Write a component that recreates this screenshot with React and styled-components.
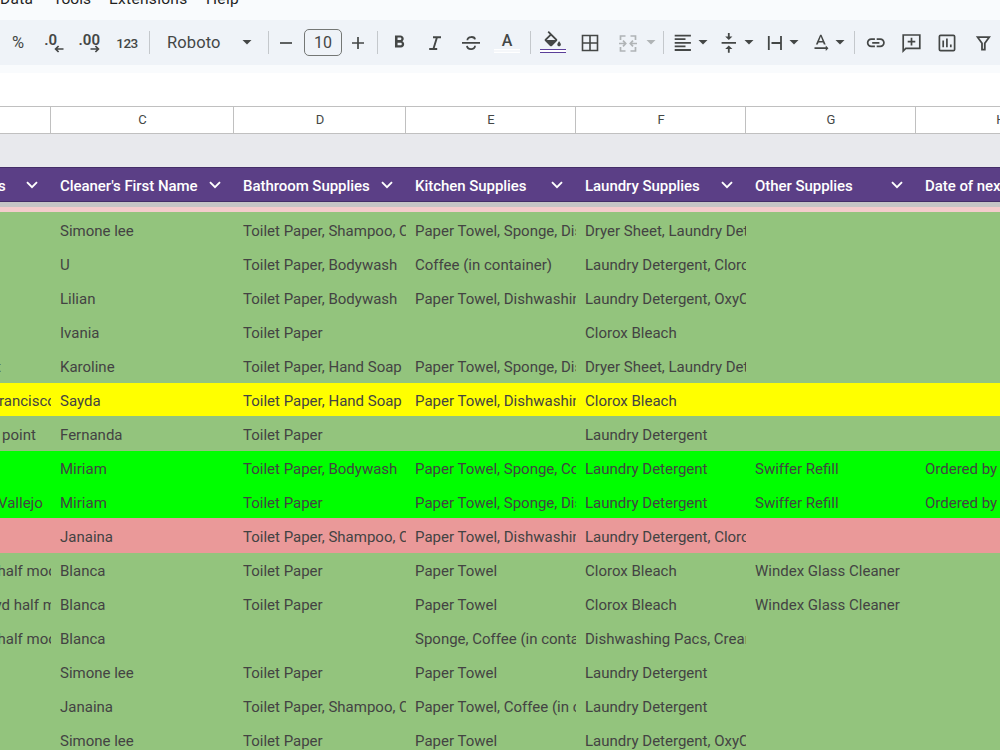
import React from "react";
import styled, { createGlobalStyle } from "styled-components";
import {
  MdFormatBold,
  MdFormatColorFill,
  MdFormatAlignLeft,
  MdVerticalAlignCenter,
  MdTextRotationNone,
  MdLink,
} from "react-icons/md";

const Global = createGlobalStyle`
  * { box-sizing: border-box; }
  body { margin: 0; overflow: hidden; }
`;

const Page = styled.div`
  width: 1000px;
  height: 750px;
  overflow: hidden;
  display: flex;
  flex-direction: column;
  background: #fff;
  font-family: Roboto, "Liberation Sans", sans-serif;
`;

const MenuBar = styled.nav`
  flex: none;
  height: 20px;
  background: #f9fbfd;
  overflow: hidden;
  display: flex;
  align-items: flex-start;
`;

const MenuItem = styled.span`
  flex: none;
  width: ${(p) => p.$w}px;
  margin-top: -10px;
  line-height: 18px;
  font-size: 15.5px;
  letter-spacing: ${(p) => p.$ls || 0}px;
  color: #1f1f1f;
  white-space: nowrap;
`;

const Toolbar = styled.div`
  flex: none;
  height: 45px;
  background: #eff3f8;
  display: flex;
  align-items: center;
  color: #444746;
`;

const ToolbarGap = styled.div`
  flex: none;
  height: 8px;
  background: #f9fbfd;
`;

const FormulaBar = styled.div`
  flex: none;
  height: 33px;
  background: #fff;
`;

const Tool = styled.div`
  flex: none;
  width: ${(p) => p.$w || 22}px;
  height: 36px;
  margin-left: ${(p) => p.$ml || 0}px;
  display: flex;
  align-items: center;
  justify-content: center;
  color: ${(p) => (p.$disabled ? "#b0b4b6" : "#444746")};
  svg { flex: none; display: block; }
`;

const ToolText = styled.span`
  font-size: ${(p) => p.$size}px;
  font-weight: ${(p) => p.$weight || 400};
  letter-spacing: ${(p) => p.$ls || 0}px;
  line-height: 20px;
  white-space: nowrap;
`;

const Separator = styled.div`
  flex: none;
  width: 1px;
  height: 23px;
  margin-left: ${(p) => p.$ml}px;
  background: #c4c8cc;
`;

const FontPicker = styled.div`
  flex: none;
  width: 85px;
  margin-left: 17px;
  display: flex;
  align-items: center;
  justify-content: space-between;
`;

const SizeBox = styled.div`
  flex: none;
  width: 38px;
  height: 27px;
  margin-left: 7px;
  border: 1px solid #747775;
  border-radius: 5px;
  display: flex;
  align-items: center;
  justify-content: center;
`;

const DecimalBox = styled.div`
  display: flex;
  flex-direction: column;
  align-items: flex-end;
  width: 20px;
  height: 20px;
`;

const DecimalText = styled.span`
  height: 12px;
  line-height: 14px;
  font-size: 15px;
  font-weight: 600;
  margin-right: ${(p) => p.$mr}px;
`;

const ColorTool = styled.div`
  flex: none;
  width: 26px;
  height: 24px;
  margin-left: ${(p) => p.$ml}px;
  display: flex;
  flex-direction: column;
  align-items: center;
  color: #444746;
  svg { display: block; }
`;

const Glyph = styled.div`
  height: 18px;
  display: flex;
  align-items: flex-start;
  justify-content: center;
  font-size: 16px;
  font-weight: 500;
  line-height: 19px;
`;

const Swatch = styled.div`
  width: 26px;
  height: 4px;
  border-top: 1px solid ${(p) => p.$c};
  border-bottom: 1px solid ${(p) => p.$c};
  background: ${(p) => p.$fill};
`;

const ColumnHeads = styled.div`
  flex: none;
  height: 28px;
  display: flex;
  border-top: 1px solid #c0c0c0;
  border-bottom: 1px solid #c0c0c0;
  background: #fff;
`;

const ColumnHead = styled.div`
  flex: none;
  width: ${(p) => p.$w}px;
  padding-left: 1px;
  border-right: 1px solid #c0c0c0;
  display: flex;
  align-items: center;
  justify-content: center;
  font-size: 13px;
  line-height: 26px;
  color: #444746;
`;

const EmptyRow = styled.div`
  flex: none;
  height: 33px;
  background: #e8e9ed;
`;

const HeaderRow = styled.div`
  flex: none;
  height: 35px;
  display: flex;
  background: #5b3f86;
  border-top: 1px solid #442e68;
  border-bottom: 1px solid #442e68;
`;

const HeaderCell = styled.div`
  flex: none;
  width: ${(p) => p.$w}px;
  padding: 2px 13px 0 ${(p) => (p.$first ? 0 : 9)}px;
  display: flex;
  align-items: center;
  justify-content: space-between;
  color: #fff;
  font-size: 15px;
  font-weight: 500;
  white-space: nowrap;
  svg { flex: none; display: block; margin-top: -2px; }
`;

const HeaderText = styled.span`
  letter-spacing: -0.05px;
  margin-left: ${(p) => p.$shift || 0}px;
`;

const FreezeBar = styled.div`
  flex: none;
  height: 5px;
  background: #c5c5c5;
`;

const HiddenRowEdge = styled.div`
  flex: none;
  height: 5px;
  background: #f4cccc;
`;

const fills = {
  done: "#93c47d",
  warn: "#ffff00",
  ordered: "#00ff00",
  alert: "#ea9999",
};

const DataRow = styled.div`
  flex: none;
  display: flex;
  height: ${(p) => p.$h}px;
  padding-top: ${(p) => (p.$h === 35 ? 1 : 0)}px;
  background: ${(p) => fills[p.$fill]};
`;

const DataCell = styled.div`
  flex: none;
  width: ${(p) => p.$w}px;
  height: 33px;
  padding-left: ${(p) => (p.$first ? 0 : 9)}px;
  overflow: hidden;
  white-space: nowrap;
  font-size: 15px;
  line-height: 36px;
  color: #434343;
`;

const CellText = styled.span`
  margin-left: ${(p) => p.$shift || 0}px;
`;

const widths = [51, 183, 172, 170, 170, 170, 170];
const letters = ["", "C", "D", "E", "F", "G", "H"];
const headers = [
  "s",
  "Cleaner's First Name",
  "Bathroom Supplies",
  "Kitchen Supplies",
  "Laundry Supplies",
  "Other Supplies",
  "Date of next",
];

const TP = "Toilet Paper";
const LD = "Laundry Detergent";
const rows = [
  [35, "done", "", 0, "Simone lee", TP + ", Shampoo, C", "Paper Towel, Sponge, Dis", "Dryer Sheet, Laundry Dete"],
  [34, "done", "", 0, "U", TP + ", Bodywash", "Coffee (in container)", LD + ", Cloro"],
  [34, "done", "", 0, "Lilian", TP + ", Bodywash", "Paper Towel, Dishwashin", LD + ", OxyC"],
  [34, "done", "", 0, "Ivania", TP, "", "Clorox Bleach"],
  [34, "done", "t", -4, "Karoline", TP + ", Hand Soap", "Paper Towel, Sponge, Dis", "Dryer Sheet, Laundry Dete"],
  [33, "warn", "rancisco", -1, "Sayda", TP + ", Hand Soap", "Paper Towel, Dishwashin", "Clorox Bleach"],
  [35, "done", "point", 2, "Fernanda", TP, "", LD],
  [34, "ordered", "", 0, "Miriam", TP + ", Bodywash", "Paper Towel, Sponge, Co", LD, "Swiffer Refill", "Ordered by"],
  [33, "ordered", "Vallejo", -2, "Miriam", TP, "Paper Towel, Sponge, Dis", LD, "Swiffer Refill", "Ordered by"],
  [35, "alert", "", 0, "Janaina", TP + ", Shampoo, C", "Paper Towel, Dishwashin", LD + ", Cloro"],
  [34, "done", "half moo", -2.5, "Blanca", TP, "Paper Towel", "Clorox Bleach", "Windex Glass Cleaner"],
  [34, "done", "yd half m", -5.5, "Blanca", TP, "Paper Towel", "Clorox Bleach", "Windex Glass Cleaner"],
  [34, "done", "half moo", -2.5, "Blanca", "", "Sponge, Coffee (in contai", "Dishwashing Pacs, Cream"],
  [34, "done", "", 0, "Simone lee", TP, "Paper Towel", LD],
  [34, "done", "", 0, "Janaina", TP + ", Shampoo, C", "Paper Towel, Coffee (in c", LD],
  [34, "done", "", 0, "Simone lee", TP, "Paper Towel", LD + ", OxyC"],
];

const Icon = ({ children, sw = 1.8 }) => (
  <svg width="22" height="22" viewBox="0 0 22 22" fill="none" stroke="currentColor" strokeWidth={sw}>
    {children}
  </svg>
);

const Caret = () => (
  <svg width="10" height="5" viewBox="0 0 10 5">
    <path d="M.5 0h9L5 4.6z" fill="currentColor" />
  </svg>
);

const Chevron = () => (
  <svg width="12" height="8" viewBox="0 0 12 8" fill="none" stroke="#fff" strokeWidth="1.9">
    <path d="M1 1.2l5 5 5-5" />
  </svg>
);

const DecimalArrow = ({ right }) => (
  <svg width="10" height="8" viewBox="0 0 10 8" fill="none" stroke="currentColor" strokeWidth="1.7">
    {right ? <path d="M0.5 4h8M5.4 1l3 3-3 3" /> : <path d="M9.5 4h-8M4.6 1l-3 3 3 3" />}
  </svg>
);

export default function App() {
  return (
    <Page>
      <Global />
      <MenuBar>
        <MenuItem $w={53} $ls={0.3}>Data</MenuItem>
        <MenuItem $w={56}>Tools</MenuItem>
        <MenuItem $w={97} $ls={0.3}>Extensions</MenuItem>
        <MenuItem $w={40} $ls={0.3}>Help</MenuItem>
      </MenuBar>

      <Toolbar>
        <Tool $w={36}><ToolText $size={16.5}>%</ToolText></Tool>
        <Tool $w={36}>
          <DecimalBox><DecimalText $mr={7}>.0</DecimalText><DecimalArrow /></DecimalBox>
        </Tool>
        <Tool $w={36}>
          <DecimalBox><DecimalText $mr={0}>.00</DecimalText><DecimalArrow right /></DecimalBox>
        </Tool>
        <Tool $w={36} $ml={1}><ToolText $size={13.5} $ls={-0.5} $weight={500}>123</ToolText></Tool>
        <Separator $ml={4} />
        <FontPicker>
          <ToolText $size={16.5} $ls={0.1}>Roboto</ToolText>
          <Caret />
        </FontPicker>
        <Separator $ml={16} />
        <Tool $ml={6}><Icon sw={1.7}><path d="M5 11h12" /></Icon></Tool>
        <SizeBox><ToolText $size={16}>10</ToolText></SizeBox>
        <Tool $ml={5}><Icon sw={1.7}><path d="M5 11h12M11 5v12" /></Icon></Tool>
        <Separator $ml={8} />
        <Tool $ml={10}><MdFormatBold size={20.5} /></Tool>
        <Tool $ml={14}>
          <Icon sw={1.9}><path d="M9 5.2h8M5.2 17h8M13 5.2L9.4 17" /></Icon>
        </Tool>
        <Tool $ml={14}>
          <Icon>
            <path d="M2 10.8h18M7.4 8.2c0-4 7.2-4.2 7.6-.8M7 13.8c.4 4.6 8.2 4.2 8 0" />
          </Icon>
        </Tool>
        <ColorTool $ml={12}>
          <Glyph>A</Glyph>
          <Swatch $c="#fff" $fill="#f5f7fa" />
        </ColorTool>
        <Separator $ml={10} />
        <ColorTool $ml={9}>
          <Glyph><MdFormatColorFill size={21.6} /></Glyph>
          <Swatch $c="#5b3f9a" $fill="#fff" />
        </ColorTool>
        <Tool $ml={13}>
          <Icon sw={1.6}><path d="M3.5 3.5h15v15h-15zM11 3.5v15M3.5 11h15" /></Icon>
        </Tool>
        <Tool $ml={16} $disabled>
          <Icon sw={1.7}>
            <path d="M8.5 4H3.5v4M3.5 15v4h5M13.5 4h5v4M18.5 15v4h-5M2 11.5h6M6 8.7l2.7 2.8L6 14.3M20 11.5h-6M16 8.7l-2.7 2.8 2.7 2.8" />
          </Icon>
        </Tool>
        <Tool $w={10} $ml={7} $disabled><Caret /></Tool>
        <Separator $ml={7} />
        <Tool $ml={8}><MdFormatAlignLeft size={21.6} /></Tool>
        <Tool $w={10} $ml={4}><Caret /></Tool>
        <Tool $ml={10}><MdVerticalAlignCenter size={21.6} /></Tool>
        <Tool $w={10} $ml={4}><Caret /></Tool>
        <Tool $ml={10}>
          <Icon><path d="M4.8 4v14M17 4v14M7.5 11H17" /></Icon>
        </Tool>
        <Tool $w={10} $ml={3}><Caret /></Tool>
        <Tool $ml={11}><MdTextRotationNone size={21.6} /></Tool>
        <Tool $w={10} $ml={3}><Caret /></Tool>
        <Separator $ml={9} />
        <Tool $ml={10}><MdLink size={21.6} /></Tool>
        <Tool $ml={13}>
          <Icon sw={1.7}>
            <path d="M3.2 19V3h16.6v13.4H5.8zM11.5 5.8v7.6M7.7 9.6h7.6" />
          </Icon>
        </Tool>
        <Tool $ml={14}>
          <Icon sw={1.7}>
            <rect x="3.4" y="3.4" width="15.2" height="15.2" rx="1.2" />
            <path d="M7.2 8.4v6.8M10.9 6.5v8.7M14.8 12.4v2.8" />
          </Icon>
        </Tool>
        <Tool $ml={14}>
          <Icon><path d="M5.6 5.2h11.6l-4.4 6v6.4H10v-6.4z" /></Icon>
        </Tool>
      </Toolbar>
      <ToolbarGap />
      <FormulaBar />

      <ColumnHeads>
        {letters.map((l, i) => <ColumnHead key={i} $w={widths[i]}>{l}</ColumnHead>)}
      </ColumnHeads>
      <EmptyRow />
      <HeaderRow>
        {headers.map((h, i) => (
          <HeaderCell key={i} $w={widths[i]} $first={i === 0}>
            <HeaderText $shift={i === 0 ? -2 : 0}>{h}</HeaderText>
            <Chevron />
          </HeaderCell>
        ))}
      </HeaderRow>
      <FreezeBar />
      <HiddenRowEdge />
      {rows.map(([h, fill, place, shift, ...cells], r) => (
        <DataRow key={r} $h={h} $fill={fill}>
          <DataCell $w={widths[0]} $first>
            <CellText $shift={shift}>{place}</CellText>
          </DataCell>
          {cells.map((c, i) => (
            <DataCell key={i} $w={widths[i + 1]}>{c}</DataCell>
          ))}
        </DataRow>
      ))}
    </Page>
  );
}
